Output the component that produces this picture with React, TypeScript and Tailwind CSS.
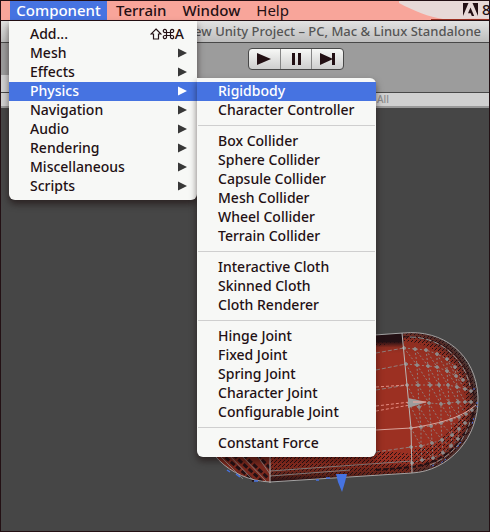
import React from "react";

const componentItems = ["Mesh", "Effects", "Physics", "Navigation", "Audio", "Rendering", "Miscellaneous", "Scripts"];

const physicsGroups = [
  ["Rigidbody", "Character Controller"],
  ["Box Collider", "Sphere Collider", "Capsule Collider", "Mesh Collider", "Wheel Collider", "Terrain Collider"],
  ["Interactive Cloth", "Skinned Cloth", "Cloth Renderer"],
  ["Hinge Joint", "Fixed Joint", "Spring Joint", "Character Joint", "Configurable Joint"],
  ["Constant Force"],
];

function PhysicsMenu() {
  return (
    <div role="menu" aria-label="Physics" className="absolute left-full -top-1 w-[179px] rounded-b-md rounded-tr-md bg-[#f7f8f6] py-1 text-[#231014] shadow-[0_4px_7px_rgba(20,5,5,0.55)]">
      {physicsGroups.map((group, i) => (
        <div key={group[0]}>
          {i > 0 && <div role="separator" className="mx-px my-[5px] h-0.5 border-t border-[#cfcfcf]" />}
          {group.map((name) => (
            <button
              key={name}
              role="menuitem"
              className={
                name === "Rigidbody"
                  ? "flex h-[19px] w-full items-center bg-[#4673e1] pb-0.5 pl-[21px] text-white"
                  : "flex h-[19px] w-full items-center pb-0.5 pl-[21px]"
              }
            >
              {name}
            </button>
          ))}
        </div>
      ))}
    </div>
  );
}

function ComponentMenu() {
  return (
    <div role="menu" aria-label="Component" className="absolute -left-px top-full z-10 mt-px w-[188px] rounded-b-md bg-[#f7f8f6] py-1 text-[#231014] shadow-[0_4px_7px_rgba(20,5,5,0.55)]">
      <button role="menuitem" className="flex h-[19px] w-full items-center justify-between pb-0.5 pl-[21px] pr-[13px]">
        <span>Add...</span>
        <span className="flex items-center">
          <svg width="12" height="12" viewBox="0 0 12 12" fill="none" stroke="currentColor" strokeWidth="1.2" aria-label="Shift">
            <path d="M6 1 11 6H8.500v5h-5V6H1Z" />
          </svg>
          <svg width="13" height="12" viewBox="0 0 13 12" fill="none" stroke="currentColor" strokeWidth="1.2" aria-label="Command">
            <path d="M4.500 4.500h4v3h-4zM4.500 4.500H3.200A1.600 1.600 0 1 1 4.500 3ZM8.500 4.500V3a1.600 1.600 0 1 1 1.500 1.500ZM8.500 7.500H10A1.600 1.600 0 1 1 8.500 9ZM4.500 7.500V9A1.600 1.600 0 1 1 3 7.500Z" />
          </svg>
          A
        </span>
      </button>
      {componentItems.map((name) => (
        <div key={name} className="relative">
          <button
            role="menuitem"
            aria-haspopup="menu"
            className={
              name === "Physics"
                ? "flex h-[19px] w-full items-center justify-between bg-[#4673e1] pb-0.5 pl-[21px] pr-2.5 text-white"
                : "flex h-[19px] w-full items-center justify-between pb-0.5 pl-[21px] pr-2.5"
            }
          >
            {name}
            <svg width="9" height="10" viewBox="0 0 9 10" className={name === "Physics" ? "fill-white" : "fill-[#383838]"}>
              <path d="M0 0.500 9 5 0 9.500Z" />
            </svg>
          </button>
          {name === "Physics" && <PhysicsMenu />}
        </div>
      ))}
    </div>
  );
}

function MenuBar() {
  return (
    <nav className="relative flex h-5 shrink-0 items-stretch border-b border-[#231014] bg-[#f8a59a] text-[15px]">
      <svg className="absolute right-0 top-0" width="90" height="19" viewBox="0 0 90 19">
        <path d="M0 0H90V18C70 17 56 19 44 18C30 16 15 10 0 2Z" fill="#e7d9d7" />
        <path d="M32 18.500H90" stroke="#9c3022" />
      </svg>
      <div className="relative ml-[9px] flex w-[97px]">
        <button className="h-full w-full bg-[#4673e1] pb-0.5 text-white">Component</button>
        <div className="absolute left-0 top-full text-[14px]">
          <ComponentMenu />
        </div>
      </div>
      <button className="ml-[9px] pb-0.5">Terrain</button>
      <button className="ml-4 pb-0.5">Window</button>
      <button className="ml-4 pb-0.5 font-normal">Help</button>
      <div className="absolute right-0 top-0 flex h-full w-[26px] items-center gap-1 overflow-hidden pb-0.5">
        <svg className="shrink-0" width="15" height="13" viewBox="0 0 15 13" fill="#231014" aria-label="Adobe">
          <path d="M0 0H5.500L0 13ZM9.500 0H15V13ZM7.500 4.500 11.200 13H8.800L7.700 10.200H5Z" />
        </svg>
        <span>8</span>
      </div>
    </nav>
  );
}

function PlayControls() {
  return (
    <div className="ml-[247px] mt-[5px] flex h-[22px] w-24 overflow-hidden rounded-sm border border-[#484848] bg-linear-to-b from-[#f7f8f6] to-[#cecece] text-[#231014]">
      <button aria-label="Play" className="flex flex-1 items-center justify-center">
        <svg width="14" height="12" fill="currentColor"><path d="M0 0 14 6 0 12Z" /></svg>
      </button>
      <button aria-label="Pause" className="flex flex-1 items-center justify-center border-x border-[#858585]">
        <svg width="9" height="12" fill="currentColor"><path d="M0 0H3V12H0ZM6 0H9V12H6Z" /></svg>
      </button>
      <button aria-label="Step" className="flex flex-1 items-center justify-center">
        <svg width="15" height="12" fill="currentColor"><path d="M0 0 12 5.500V0H15V12H12V6.500L0 12Z" /></svg>
      </button>
    </div>
  );
}

/* Rows of mesh vertices on the right cap, from the seam outwards. */
const meshRows: [number, number][][] = [
  [[404, 348], [415, 349], [426, 350], [437, 354], [447, 359], [455, 367]],
  [[406, 364], [417, 365], [428, 366], [437, 367], [447, 371], [456, 376], [463, 380]],
  [[407, 385], [418, 385], [430, 385], [439, 385], [448, 385], [457, 387], [465, 389], [471, 391]],
  [[409, 403], [419, 407], [429, 403], [441, 404], [449, 403], [458, 402], [465, 402], [471, 402]],
  [[411, 428], [421, 427], [431, 426], [441, 423], [451, 420], [459, 417], [466, 414], [472, 410]],
  [[411, 447], [421, 446], [432, 443], [442, 440], [452, 435], [459, 429], [465, 423]],
  [[412, 463], [422, 460], [433, 458], [443, 453], [451, 446], [458, 439]],
];

function line(points: [number, number][]) {
  return "M" + points.map((p) => p.join(" ")).join("L");
}

const meshColumns = [1, 2, 3, 4, 5].map((c) => meshRows.map((row) => row[c]));
const meshDiagonals = meshRows.slice(0, 6).flatMap((row, r) =>
  row.slice(0, 6).filter((_, c) => c + 1 < meshRows[r + 1].length).map((p, c) => line([p, meshRows[r + 1][c + 1]])),
);

function CapsuleMesh() {
  const outline = "M403 333C443 329 476 354 478 397C479 439 448 471 412 473L270 482C229 480 199 450 198 410C198 372 225 346 260 343Z";
  return (
    <svg className="absolute left-[189px] top-[212px]" width="299" height="180" viewBox="190 320 299 180" aria-label="Capsule">
      <defs>
        <radialGradient id="capShade" gradientUnits="userSpaceOnUse" cx="404" cy="402" r="76">
          <stop offset="0.6" stopColor="#9c3022" />
          <stop offset="0.82" stopColor="#8c2d20" />
          <stop offset="0.93" stopColor="#4f2a26" />
          <stop offset="1" stopColor="#444" />
        </radialGradient>
        <linearGradient id="bodyShade" x1="0" y1="0" x2="0" y2="1">
          <stop offset="0" stopColor="#231014" />
          <stop offset="0.06" stopColor="#231014" />
          <stop offset="0.1" stopColor="#8c2d20" />
          <stop offset="0.14" stopColor="#9c3022" />
          <stop offset="0.85" stopColor="#9c3022" />
          <stop offset="0.95" stopColor="#5d2219" />
          <stop offset="1" stopColor="#231014" />
        </linearGradient>
        <pattern id="grain" width="4" height="4" patternUnits="userSpaceOnUse">
          <path d="M0 0h1v1h-1zM2 2h1v1h-1zM3 1h1v1h-1z" fill="#231014" />
        </pattern>
      </defs>
      <path d={outline} fill="url(#bodyShade)" />
      <path d="M403 333C443 329 476 354 478 397C479 439 448 471 412 473Z" fill="url(#capShade)" />
      <path d="M403 333C443 329 476 354 478 397C479 439 448 471 412 473V450C440 446 465 424 465 396C464 368 436 343 404 341Z" fill="url(#grain)" />
      <path d="M198 410C199 450 229 480 270 482V440Z" fill="#7a291e" />
      <path d="M376 336H403V342L376 346ZM270 482V450H376L412 454V473Z" fill="url(#grain)" />
      <path d="M220 453 254 481M228 450 262 481M238 450 268 478M252 450 270 468" stroke="#231014" strokeWidth="3" strokeDasharray="5 2" />
      <g fill="none" stroke="#8f8f8f" strokeWidth="0.8">
        {meshRows.map((row) => <path key={line(row)} d={line(row)} strokeDasharray="2 2" />)}
        {meshColumns.map((column, i) => <path key={i} d={line(column.filter(Boolean))} strokeDasharray="2 2" />)}
        <path d={meshDiagonals.join("")} strokeDasharray="2 2" />
        <path d="M376 353 404 348M376 370 406 364M376 390 407 385M376 452 411 447" strokeDasharray="4 2" />
        <path d={meshRows.flat().map(([x, y]) => "M" + (x - 2) + " " + y + "h4m-2-2v4").join("")} strokeWidth="1.4" />
      </g>
      <path d="M270 471 412 461M270 476 350 470M216 452 243 479M226 452 253 480M240 454 266 481M256 454 270 474" stroke="#8b8b8b" fill="none" strokeWidth="0.8" />
      <path d="M376 470 412 467C445 463 468 440 474 410" fill="none" stroke="#231014" strokeWidth="2" strokeDasharray="5 2" />
      <path d="M403 337C443 334 470 360 474 396" fill="none" stroke="#231014" strokeDasharray="5 2" />
      <path d="M410 337C440 337 464 358 470 386M430 465C450 457 464 442 470 422" fill="none" stroke="#8f8f8f" strokeDasharray="6 2" />
      <path d={outline} fill="none" stroke="#a3a3a3" />
      <path d="M402 333 407 385 411 428 412 473M270 454V483" stroke="#b9b4b2" fill="none" />
      <path d="M376 430 411 428C436 424 460 419 476 405" stroke="#d9a49c" fill="none" />
      <path d="M376 387 407 385M376 406 410 402M376 411 410 405" stroke="#f8a59a" strokeWidth="0.8" strokeDasharray="3 2" />
      <path d="M408 398 427 402 408 408Z" fill="#9c9c9c" />
      <path d="M413 402h13" stroke="#f8a59a" />
      <path d="M474 388v4M477 402v5M474 418l-2 6M461 442l-5 7M446 459l-5 4M434 465l-4 2" stroke="#4673e1" strokeDasharray="2 2" />
      <path d="M227 470l3 2M236 474l4 3M254 481h4M316 480h3M326 478h4" stroke="#4673e1" strokeWidth="1.500" />
      <path d="M336 474H347L345 482 342 492 338 482Z" fill="#4673e1" />
    </svg>
  );
}

export default function App() {
  return (
    <div className="flex min-h-screen flex-col overflow-hidden border border-[#231014] bg-[#464646] font-['Noto_Sans','Lucida_Grande',sans-serif] text-[14px] font-medium leading-[19px] text-[#231014]">
      <MenuBar />
      <header className="flex h-[22px] shrink-0 items-center justify-end overflow-hidden whitespace-nowrap border-b border-[#484848] bg-linear-to-b from-[#e2e2e2] to-[#bdbdbd] pr-2 text-[13px] text-[#555]">
        New Unity Project – PC, Mac &amp; Linux Standalone
      </header>
      <div className="relative h-[50px] shrink-0 border-b border-[#484848] bg-[#9c9c9c]">
        <PlayControls />
        <div className="absolute bottom-0 left-0 h-[17px] w-2 bg-[#d0d0d0]" />
      </div>
      <div className="flex h-[15px] shrink-0 items-center border-b-2 border-[#999] bg-[#d0d0d0] pl-[376px] text-[10px] text-[#8b8b8b]">
        All
      </div>
      <main className="relative flex-1">
        <CapsuleMesh />
      </main>
    </div>
  );
}
